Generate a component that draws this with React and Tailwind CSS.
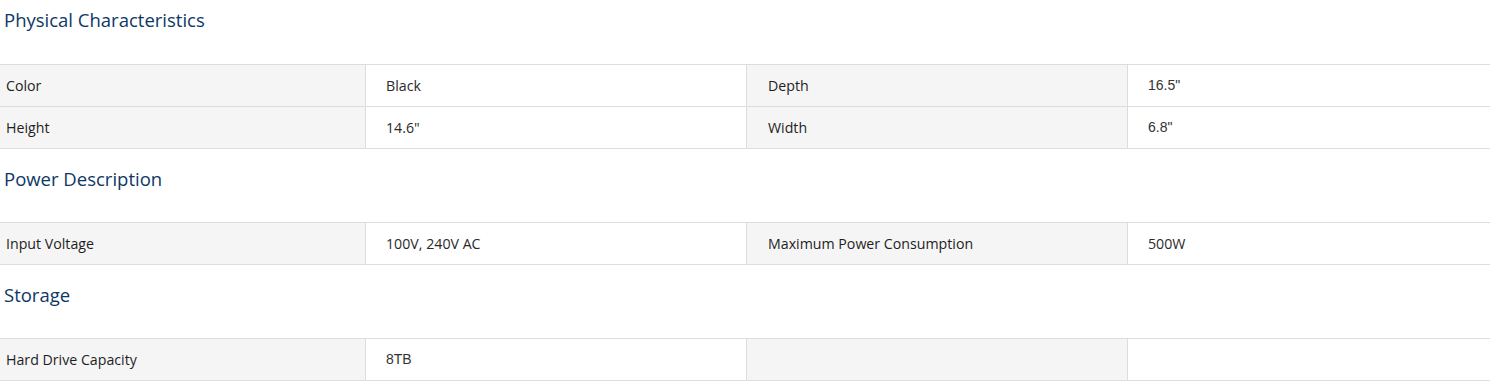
import React from "react";

const sections = [
  {
    title: "Physical Characteristics",
    rows: [
      [["Color", "Black"], ["Depth", "16.5\"", true]],
      [["Height", "14.6\""], ["Width", "6.8\"", true]],
    ],
  },
  {
    title: "Power Description",
    rows: [[["Input Voltage", "100V, 240V AC"], ["Maximum Power Consumption", "500W"]]],
  },
  {
    title: "Storage",
    rows: [[["Hard Drive Capacity", "8TB", true], ["", ""]]],
  },
];

function SpecTable({ rows }) {
  return (
    <div className="overflow-hidden">
      <table className="ml-[-16px] w-[1524px] table-fixed border-collapse text-[14.2px] text-[#1e1e1e]">
        <tbody>
          {rows.map((row, i) => (
            <tr key={i} className="h-[42px]">
              {row.map(([label, value, alt], j) => (
                <React.Fragment key={j}>
                  <td className="w-[381px] border border-[#dddddd] bg-[#f5f5f5] pl-[21px] align-middle">
                    {label}
                  </td>
                  <td
                    className={
                      "w-[381px] border border-[#dddddd] bg-white pl-[20px] align-middle " +
                      (alt ? "font-['Liberation_Sans',sans-serif] text-[14px] text-[#333]" : "text-[#2a2a2a]")
                    }
                  >
                    {value}
                  </td>
                </React.Fragment>
              ))}
            </tr>
          ))}
        </tbody>
      </table>
    </div>
  );
}

export default function App() {
  return (
    <div className="w-[1490px] bg-white font-['Open_Sans','Noto_Sans',sans-serif]">
      {sections.map((s, i) => (
        <section key={s.title}>
          <h2
            className={
              "px-[4px] text-[18.5px] leading-[22px] text-[#0c3866] " +
              (i === 0 ? "pt-[9px] mb-[33px]" : "pt-[19px] mb-[32px]")
            }
          >
            {s.title}
          </h2>
          <SpecTable rows={s.rows} />
        </section>
      ))}
    </div>
  );
}
